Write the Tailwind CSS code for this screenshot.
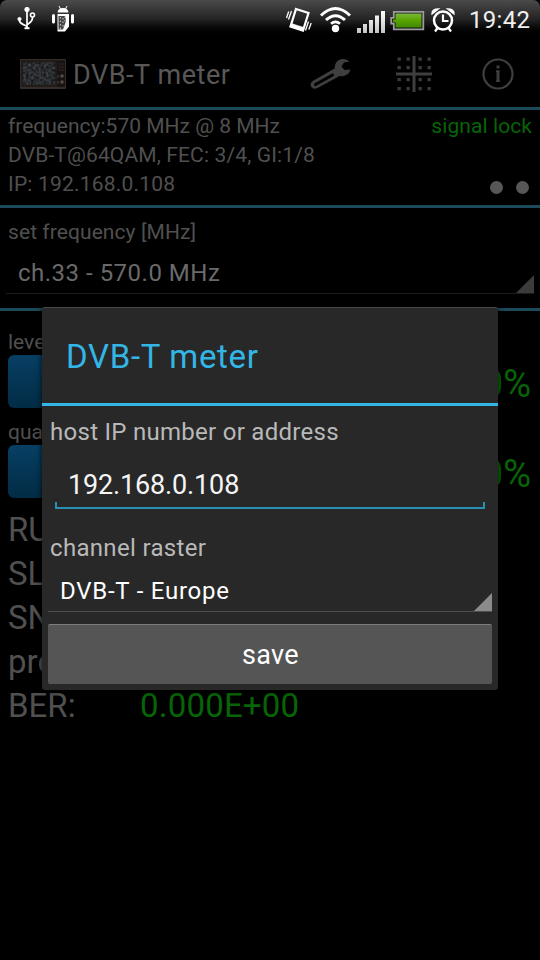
<!DOCTYPE html>
<html lang="en">
<head>
<meta charset="utf-8">
<title>DVB-T meter</title>
<script src="https://cdn.jsdelivr.net/npm/@tailwindcss/browser@4"></script>
</head>
<body class="bg-black">
<div class="relative w-[540px] h-[960px] overflow-hidden bg-black font-['Roboto','Noto_Sans',sans-serif] text-[#505050] whitespace-nowrap flex flex-col">

  <!-- status bar -->
  <div class="h-[38px] shrink-0 flex items-center rounded-t-[7px] bg-linear-to-b from-[#4b4b4b] via-[#242424] to-black">
    <svg class="w-[90px] h-[38px]" viewBox="0 0 90 38" fill="none" stroke="#fff" stroke-width="1.7">
      <path d="M27 9V28M19.500 19V21Q20 23.500 26.500 26M32.500 17Q33 21 27.500 24.500"/>
      <circle cx="27" cy="9.500" r="2.200" fill="#fff" stroke-width="1"/>
      <circle cx="19.500" cy="19" r="1.600" fill="#fff" stroke-width="1"/>
      <circle cx="32.500" cy="15" r="2" stroke-width="1.600"/>
      <path d="M24.500 28.200H29.500" stroke-width="2"/>
      <path d="M57.500 12.500Q58 8 63 8T68.500 12.500ZM57.500 14H69V26.500L65 31.500H57.500Z" fill="#fff" stroke="none"/>
      <path d="M59 6L60.500 9M67 6L65.500 9" stroke-width="1"/>
      <path d="M53.500 15.500V22M72.500 15.500V22" stroke-width="3" stroke-linecap="round"/>
      <path d="M58.500 16H65L66 21L63 29.500H58.500Z" fill="#444" stroke="none"/>
      <path d="M60.500 17V29M63 18V27M65 16.500V22" stroke="#bbb" stroke-width="1.200" stroke-dasharray="1.500 2"/>
    </svg>
    <svg class="ml-auto w-[178px] h-[38px]" viewBox="284 0 178 38" fill="none" stroke="#fff" stroke-width="2">
      <defs><linearGradient id="sg" x1="0" y1="0" x2="0" y2="1"><stop offset="0" stop-color="#fff"/><stop offset="1" stop-color="#c4c4c4"/></linearGradient>
      <linearGradient id="bg" x1="0" y1="0" x2="0" y2="1"><stop offset="0" stop-color="#7cb83a"/><stop offset=".5" stop-color="#57a300"/><stop offset="1" stop-color="#3f8a00"/></linearGradient></defs>
      <path d="M296 9L308.500 13L303 30.500L290.500 26.500Z" stroke-width="2.200"/>
      <path d="M290.500 26.500L303 30.500L304 27.500L291.500 23.500Z" fill="#fff" stroke-width=".5"/>
      <path d="M291.500 11L288.500 19.500M288.700 11.500L286.500 18M308.500 21.500L305.500 30.500M311.200 23L308.800 29.500" stroke-width="1.300"/>
      <path d="M321 15.500Q335.500 1.500 350 15.500M326 20Q335.500 11.500 345 20" stroke-width="3"/>
      <path d="M331 23.800Q335.500 19.800 340 23.800" stroke-width="2.600"/>
      <circle cx="335.500" cy="28.500" r="3.700" fill="#fff" stroke="none"/>
      <path d="M357 28h4v5h-4zM363 24h4v9h-4zM369 20h4v13h-4zM375 15.500h4V33h-4zM381 11h4v22h-4z" fill="url(#sg)" stroke="none"/>
      <path d="M391.200 17.800H393.800V11.800H423.300V29.300H393.800V23.500H391.200Z" fill="#111" stroke="#9c9c9c" stroke-width="1.800"/>
      <path d="M393 19.500h2.500v-6H421.500V27.500H395.500V22H393z" fill="url(#bg)" stroke="none"/>
      <circle cx="443" cy="20.500" r="9" stroke-width="2.500"/>
      <path d="M443 14.500V21H448.500M437.500 28L435 31.500M448.500 28L451 31.500" stroke-width="2.200"/>
      <path d="M432 14Q431.500 9 438.500 9Z M454 14Q454.500 9 447.500 9Z" fill="#fff" stroke-width="1.300"/>
    </svg>
    <div class="w-[78px] pl-[7px] text-[24px] leading-[38px] text-[#f0f0f0] tracking-[0.3px] pt-px">19:42</div>
  </div>

  <!-- action bar -->
  <div class="h-[69px] shrink-0 flex items-center pt-[4px]">
    <svg class="ml-[19px] w-[48px] h-[34px] -mt-[2px]" viewBox="0 0 48 34">
      <defs><filter id="noise" x="0" y="0" width="100%" height="100%" color-interpolation-filters="sRGB"><feTurbulence type="fractalNoise" baseFrequency=".4" numOctaves="2" seed="4"/><feColorMatrix values=".32 0 0 0 .005  .32 0 0 0 .015  .32 0 0 0 .025  0 0 0 0 1"/></filter></defs>
      <path d="M1 2H47V32H1Z" fill="#221c19"/>
      <path d="M1.500 2.500H46.500V31H1.500Z" fill="none" stroke="#332c29"/>
      <path d="M2 31H46" stroke="#403936"/>
      <rect x="3.500" y="5" width="33" height="23" filter="url(#noise)"/>
      <rect x="3" y="4.500" width="34" height="24" rx="4" fill="none" stroke="#211c1a" stroke-width="1.500"/>
      <path d="M38 4H46V30H38Z" fill="#171312"/>
      <path d="M39 7h6M39 10h6M39 13h6" stroke="#302724"/>
      <circle cx="43" cy="19" r="1.800" fill="#514a46"/><circle cx="43" cy="25" r="1.800" fill="#514a46"/><path d="M39 18v3M39 24v3" stroke="#4b443f"/>
    </svg>
    <div class="ml-[6px] w-[180px] text-[27px] leading-[40px] tracking-[0.55px] text-[#585858]">DVB-T meter</div>
    <svg class="ml-auto w-[240px] h-[60px]" viewBox="300 45 240 60" fill="none" stroke="#3f3f3f">
      <path d="M313.500 80.500L335.500 68L341.500 75L317.500 88Q313 90 311 86.500Q309.500 83 313.500 80.500Z" fill="#3f3f3f" stroke="none"/>
      <path d="M315.500 84.500L332.500 75" stroke="#000" stroke-width="3" stroke-linecap="round"/>
      <path d="M349.500 61.500Q344 57.500 339 60Q333.500 63 335 71Q337 76.500 343 76.200Q349 75 350.500 69.500L344.500 70L341.500 66.500L344 62.500Z" fill="#3f3f3f" stroke="none"/>
      <path d="M414 56V92M396 74H432" stroke-width="3"/>
      <g fill="#3a3a3a" stroke="none">
        <path d="M397.500 57.500h3.300v3.300h-3.300zM406.500 57.500h3.300v3.300h-3.300zM418.500 57.500h3.300v3.300h-3.300zM427.500 57.500h3.300v3.300h-3.300zM397.500 66h3.300v3.300h-3.300zM406.500 66h3.300v3.300h-3.300zM418.500 66h3.300v3.300h-3.300zM427.500 66h3.300v3.300h-3.300zM397.500 78h3.300v3.300h-3.300zM406.500 78h3.300v3.300h-3.300zM418.500 78h3.300v3.300h-3.300zM427.500 78h3.300v3.300h-3.300zM397.500 87h3.300v3.300h-3.300zM406.500 87h3.300v3.300h-3.300zM418.500 87h3.300v3.300h-3.300zM427.500 87h3.300v3.300h-3.300z"/>
      </g>
      <circle cx="498" cy="74" r="14.500" stroke-width="2.200"/>
      <path d="M498 70.500V82" stroke-width="3"/>
      <path d="M496 71.200H499.500M496 81.300H500" stroke-width="1.400"/>
      <path d="M496.500 65.500h3v3h-3z" fill="#3f3f3f" stroke="none"/>
    </svg>
  </div>

  <!-- tuner info -->
  <div class="h-[98px] shrink-0 border-t-3 border-[#1b4a5b] pt-[2px] px-[8px] flex justify-between text-[21px] leading-[29px]">
    <div>
      <div>frequency:570 MHz @ 8 MHz</div>
      <div class="tracking-[0.13px]">DVB-T@64QAM, FEC: 3/4, GI:1/8</div>
      <div class="tracking-[0.2px]">IP: 192.168.0.108</div>
    </div>
    <div class="flex flex-col items-end justify-between pb-[11px]">
      <div class="text-[#076407] tracking-[0.08px]">signal lock</div>
      <div class="flex gap-[13px] pr-[3px]"><i class="size-[13px] rounded-full bg-[#575757]"></i><i class="size-[13px] rounded-full bg-[#575757]"></i></div>
    </div>
  </div>

  <!-- frequency selector -->
  <div class="h-[103px] shrink-0 border-t-3 border-[#1b4a5b] pt-[10px] px-[6px]">
    <div class="pl-[2px] text-[21px] leading-[29px] tracking-[0.08px]">set frequency [MHz]</div>
    <div class="mt-[3px] h-[44px] border-b border-[#1c1c1c] flex items-end justify-between">
      <div class="pl-[12px] text-[24px] leading-[48px] h-[44px] tracking-[0.5px] text-[#6a6a6a]">ch.33 - 570.0 MHz</div>
      <svg class="size-[18px]" viewBox="0 0 18 18"><path d="M18 0V18H0Z" fill="#3b3b3b"/></svg>
    </div>
  </div>

  <!-- measurements -->
  <div class="shrink-0 border-t-3 border-[#1b4a5b] pt-[16px] px-[8px]">
    <div class="h-[28px] text-[21px] leading-[30px]">level</div>
    <div class="h-[53px] flex items-center justify-between">
      <div class="w-[400px] h-full rounded-[6px] bg-linear-to-b from-[#073f64] to-[#022c45]"></div>
      <div class="text-[38px] leading-[53px] text-[#076407] pt-[5px] pr-px">0%</div>
    </div>
    <div class="mt-[9px] h-[28px] text-[21px] leading-[31px]">quality</div>
    <div class="h-[53px] flex items-center justify-between">
      <div class="w-[400px] h-full rounded-[6px] bg-linear-to-b from-[#073f64] to-[#022c45]"></div>
      <div class="text-[38px] leading-[53px] text-[#076407] pt-[5px] pr-px">0%</div>
    </div>
    <div class="mt-[10px] text-[33px] leading-[44px]">
      <div>RU</div>
      <div>SL</div>
      <div>SN</div>
      <div>pro</div>
      <div class="flex"><span class="w-[132px]">BER:</span><span class="text-[#076407] tracking-[0.2px]">0.000E+00</span></div>
    </div>
  </div>

  <!-- settings dialog -->
  <div class="absolute left-[42px] top-[307px] w-[456px] h-[383px] rounded-[3px] bg-[#282828] border-t border-[#484848] shadow-[0_0_6px_rgba(0,0,0,0.8)] flex flex-col">
    <div class="h-[98px] border-b-3 border-[#33b5e5] pl-[24px] text-[33px] leading-[98px] tracking-[0.68px] text-[#33b5e5]">DVB-T meter</div>
    <div class="px-[6px]">
      <div class="pl-[2px] pt-[9px] text-[24px] leading-[34px] tracking-[0.28px] text-[#b9b9b9]">host IP number or address</div>
      <div class="mx-[7px] mt-[8px] h-[52px] flex flex-col justify-between">
        <div class="pl-[13px] text-[27px] leading-[56px] h-[45px] tracking-[-0.15px] text-[#f5f5f5]">192.168.0.108</div>
        <div class="h-[7px] border-x-2 border-b-2 border-[#2a8fb5]"></div>
      </div>
      <div class="pl-[2px] mt-[22px] text-[24px] leading-[34px] tracking-[0.32px] text-[#b9b9b9]">channel raster</div>
      <div class="h-[47px] border-b border-[#505050] flex items-end justify-between">
        <div class="pl-[12px] h-[46px] text-[24px] leading-[52px] tracking-[0.75px] text-white">DVB-T - Europe</div>
        <svg class="size-[18px]" viewBox="0 0 18 18"><path d="M18 0V18H0Z" fill="#8b8b8b"/></svg>
      </div>
      <div class="mt-[12px] h-[60px] rounded-[2px] bg-[#555] border-t border-[#7d7d7d] text-center text-[27px] leading-[61px] tracking-[0.3px] pl-px text-white">save</div>
    </div>
  </div>
</div>
</body>
</html>
